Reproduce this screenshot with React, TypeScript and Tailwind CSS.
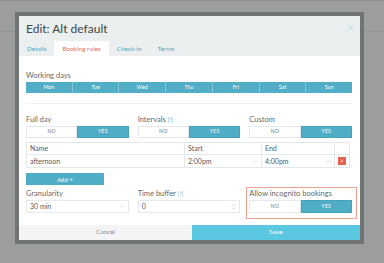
import React from 'react';

const days = ['Mon', 'Tue', 'Wed', 'Thu', 'Fri', 'Sat', 'Sun'];
const tabs = ['Details', 'Booking rules', 'Check-in', 'Terms'];

const Label = ({ text, hint }: { text: string; hint?: boolean }) => (
    <div className="h-[8px] leading-[8px] text-[7.5px] text-[#646a6d] flex items-center">
        {text}
        {hint && <span className="ml-[2px] text-[5px] text-[#5ab4cc]">[?]</span>}
    </div>
);

const Toggle = ({ h = 'h-[12px]' }: { h?: string }) => (
    <div className={'mt-[2px] flex text-[5px] tracking-[0.3px] ' + h}>
        <div className="w-1/2 border border-[#e4e9ea] bg-white text-[#6d7376] flex items-center justify-center">NO</div>
        <div className="w-1/2 border border-[#45a2b9] bg-[#4faec6] text-white flex items-center justify-center">YES</div>
    </div>
);

const Chevron = () => (
    <svg width="5" height="3" viewBox="0 0 5 3" className="mr-[3px]">
        <path d="M0.5 0.5 L2.5 2.5 L4.5 0.5" fill="none" stroke="#c4cbce" strokeWidth="0.6" />
    </svg>
);

export default function App() {
    return (
        <div className="relative w-[384px] h-[263px] overflow-hidden bg-[#9c9e9e] pl-[15px] pt-[12px]" style={{ fontFamily: 'Lato, "Liberation Sans", sans-serif' }}>
            <div className="absolute left-0 top-0 w-full h-[1px] bg-[#8d8f8f]" />
            <div className="absolute left-0 top-[31px] w-full h-[1px] bg-[#939595]" />
            <div className="relative w-[349px] border-[4px] border-[#707373] bg-white">
                {/* header */}
                <div className="relative bg-[#ebeff0]">
                    <div className="h-[25px] pl-[7px] flex items-center text-[12px] text-[#40464a]">Edit: Alt default</div>
                    <svg width="7" height="7" viewBox="0 0 7 7" className="absolute right-[6px] top-[8px]">
                        <path d="M0.5 0.5 L6.5 6.5 M6.5 0.5 L0.5 6.5" stroke="#9ccbd8" strokeWidth="0.7" />
                    </svg>
                    <div className="flex h-[15px] text-[6.4px]">
                        {tabs.map((t) => (
                            <div key={t} className={'px-[8px] flex items-center ' + (t === 'Booking rules' ? 'bg-white text-[#e2685a]' : 'text-[#4ba8c2]')}>{t}</div>
                        ))}
                    </div>
                </div>

                {/* body */}
                <div className="px-[7px] pt-[16px] pb-[12px] pr-[8px]">
                    <Label text="Working days" />
                    <div className="mt-[2px] h-[11px] flex bg-[#52aec6] text-white text-[5.3px]">
                        {days.map((d, i) => (
                            <div key={d} className={'flex-1 flex items-center justify-center ' + (i > 0 ? 'border-l border-[#7fc4d5]' : '')}>{d}</div>
                        ))}
                    </div>
                    <div className="mt-[10px] h-[1px] bg-[#f0f2f3]" />

                    <div className="mt-[12px] grid grid-cols-3 gap-x-[9px]">
                        <div>
                            <Label text="Full day" />
                            <Toggle />
                        </div>
                        <div>
                            <Label text="Intervals" hint />
                            <Toggle />
                        </div>
                        <div>
                            <Label text="Custom" />
                            <Toggle />
                        </div>
                    </div>

                    <div className="mt-[4px] mr-[2px] border border-[#e3e8ea] text-[7px] text-[#555b5e]">
                        <div className="flex h-[12px] border-b border-[#e3e8ea]">
                            <div className="w-[157px] pl-[3px] flex items-center">Name</div>
                            <div className="w-[77px] pl-[3px] border-l border-[#e3e8ea] flex items-center">Start</div>
                            <div className="w-[73px] pl-[3px] border-l border-[#e3e8ea] flex items-center">End</div>
                            <div className="flex-1 border-l border-[#e3e8ea]" />
                        </div>
                        <div className="flex h-[12px]">
                            <div className="w-[157px] pl-[3px] flex items-center">afternoon</div>
                            <div className="w-[77px] pl-[3px] border-l border-[#e3e8ea] flex items-center justify-between">2:00pm<Chevron /></div>
                            <div className="w-[73px] pl-[3px] border-l border-[#e3e8ea] flex items-center justify-between">4:00pm<Chevron /></div>
                            <div className="flex-1 border-l border-[#e3e8ea] flex items-center justify-center">
                                <div className="w-[8px] h-[8px] bg-[#e2624f] flex items-center justify-center">
                                    <svg width="4" height="4" viewBox="0 0 4 4">
                                        <path d="M0.5 0.5 L3.5 3.5 M3.5 0.5 L0.5 3.5" stroke="#fbd9d3" strokeWidth="0.6" />
                                    </svg>
                                </div>
                            </div>
                        </div>
                    </div>

                    <div className="mt-[5px] w-[78px] h-[12px] bg-[#4faec6] text-white text-[6px] flex items-center justify-center">Add +</div>

                    <div className="mt-[5px] grid grid-cols-3 gap-x-[9px]">
                        <div>
                            <Label text="Granularity" />
                            <div className="mt-[2px] h-[12.5px] border border-[#e6eaeb] text-[7px] text-[#555b5e] pl-[3px] flex items-center justify-between">30 min<Chevron /></div>
                        </div>
                        <div>
                            <Label text="Time buffer" hint />
                            <div className="mt-[2px] h-[12.5px] border border-[#e6eaeb] text-[7px] text-[#555b5e] pl-[3px] flex items-center justify-between">
                                0
                                <svg width="5" height="7" viewBox="0 0 5 7" className="mr-[3px]">
                                    <path d="M1 2.5 L2.5 1 L4 2.5 M1 4.5 L2.5 6 L4 4.5" fill="none" stroke="#b9c1c4" strokeWidth="0.6" />
                                </svg>
                            </div>
                        </div>
                        <div className="relative">
                            <div className="absolute -left-[3px] -right-[5px] -top-[3px] -bottom-[6px] border border-[#f0a292]" />
                            <Label text="Allow incognito bookings" />
                            <Toggle h="h-[12.5px]" />
                        </div>
                    </div>
                </div>

                {/* footer */}
                <div className="flex h-[15px] text-[6.5px]">
                    <div className="w-[173px] bg-[#f3f5f5] text-[#868c8f] flex items-center justify-center">Cancel</div>
                    <div className="flex-1 bg-[#5cc7e0] text-white flex items-center justify-center">Save</div>
                </div>
            </div>
        </div>
    );
}
